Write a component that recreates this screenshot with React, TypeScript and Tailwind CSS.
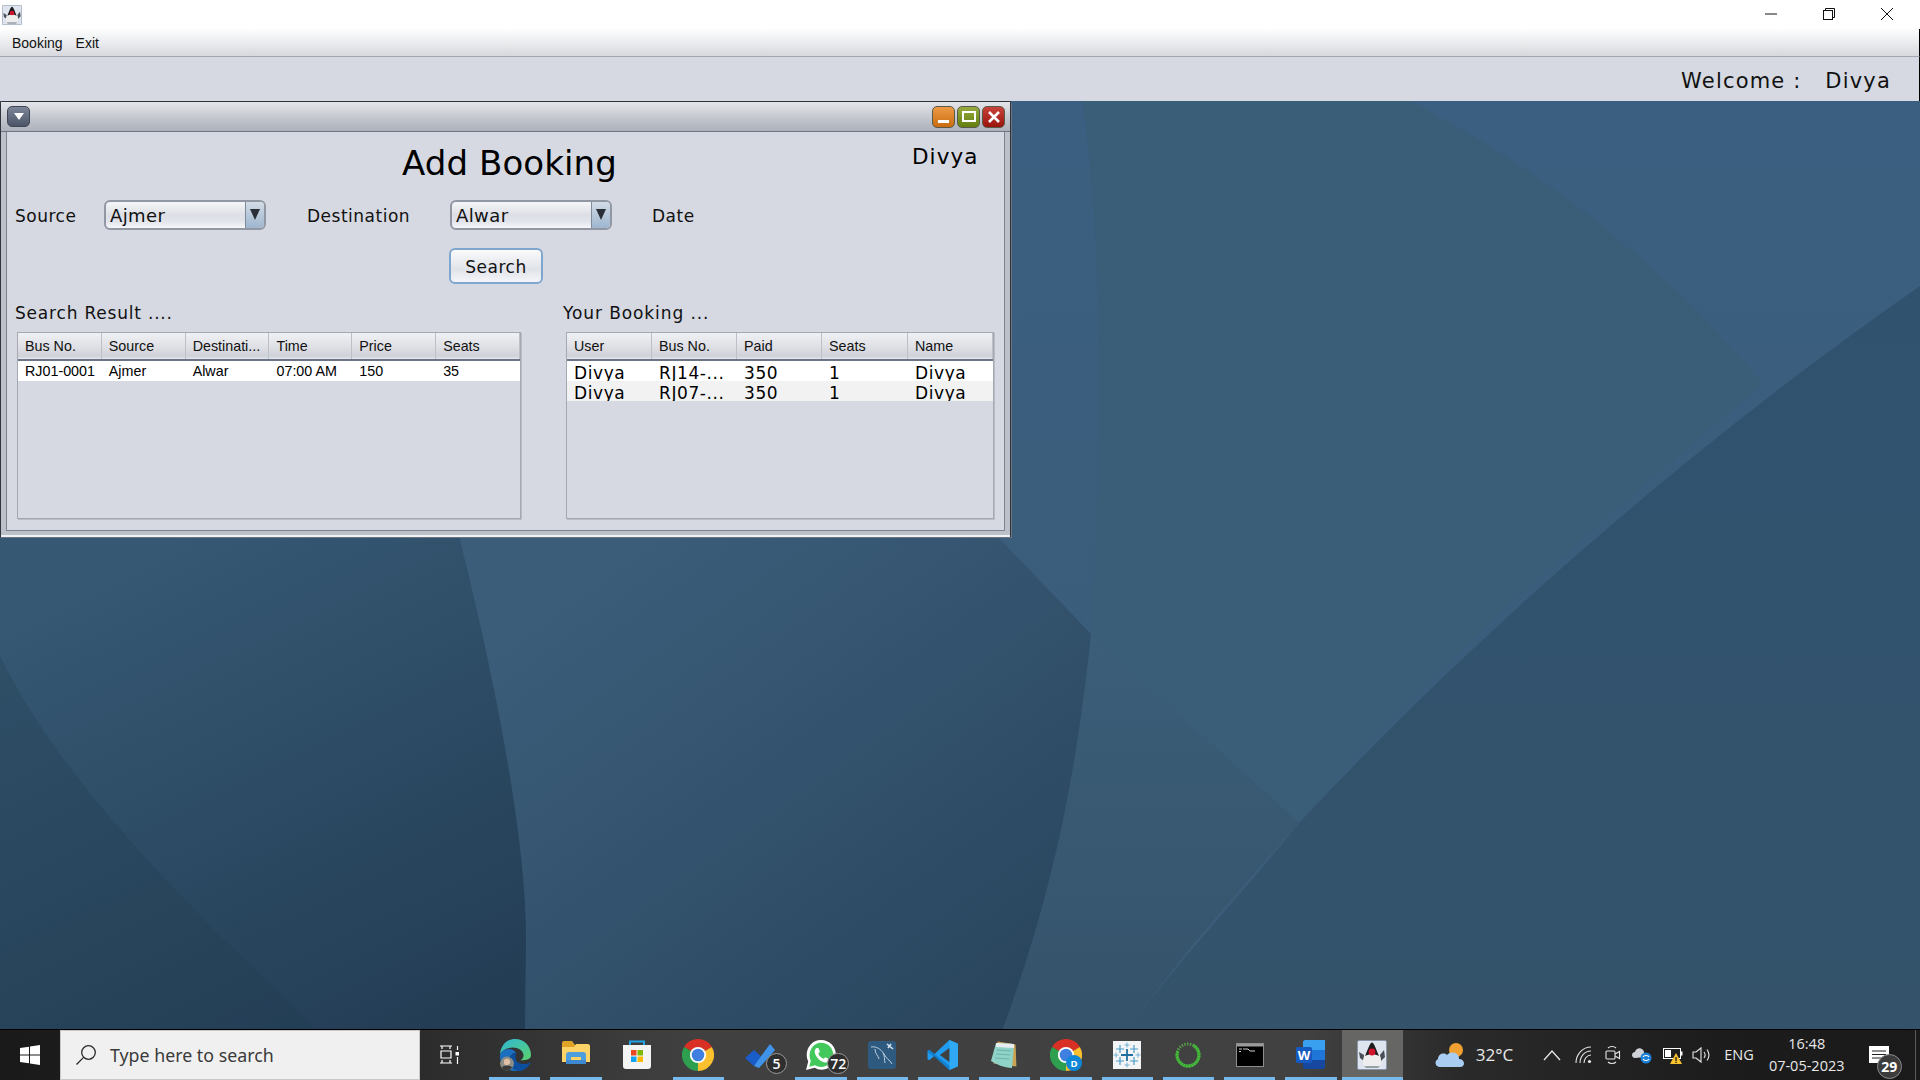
import React from 'react'

const dejavu = "font-['DejaVu_Sans',sans-serif]"

function Wallpaper() {
  return (
    <svg className="absolute inset-0 w-full h-full" viewBox="0 102 1920 928" preserveAspectRatio="none">
      <defs>
        <linearGradient id="wpTop" x1="0" y1="0" x2="0" y2="1">
          <stop offset="0" stopColor="#3b5f80" />
          <stop offset="1" stopColor="#3a5c78" />
        </linearGradient>
        <linearGradient id="wpMid" gradientUnits="userSpaceOnUse" x1="620" y1="560" x2="960" y2="1030">
          <stop offset="0" stopColor="#3b5d79" />
          <stop offset="1" stopColor="#2a465f" />
        </linearGradient>
        <linearGradient id="wpLeft" gradientUnits="userSpaceOnUse" x1="180" y1="540" x2="420" y2="1030">
          <stop offset="0" stopColor="#365873" />
          <stop offset="1" stopColor="#233d55" />
        </linearGradient>
        <linearGradient id="wpTri" x1="0" y1="0" x2="0" y2="1">
          <stop offset="0" stopColor="#3c5e78" />
          <stop offset="1" stopColor="#35536b" />
        </linearGradient>
        <linearGradient id="wpDiag" x1="0" y1="0" x2="0" y2="1">
          <stop offset="0" stopColor="#30526f" />
          <stop offset="1" stopColor="#34536b" />
        </linearGradient>
      </defs>
      <rect x="0" y="102" width="1920" height="928" fill="url(#wpTop)" />
      <path d="M1082 102 C1100 220 1106 400 1091 635 L1299 824 C1400 700 1520 590 1763 385 C1640 240 1520 160 1410 102 Z" fill="#3a5d78" />
      <path d="M1920 287 C1700 440 1480 630 1299 824 C1230 910 1170 970 1130 1030 L1920 1030 Z" fill="url(#wpDiag)" />
      <path d="M1091 635 L1299 824 C1230 900 1170 970 1130 1030 L1003 1030 C1050 900 1075 790 1091 635 Z" fill="url(#wpTri)" />
      <path d="M0 537 L997 537 L1091 635 C1075 790 1050 900 1003 1030 L0 1030 Z" fill="url(#wpMid)" />
      <path d="M0 537 L459 537 C490 660 526 830 526 940 L525 1030 L0 1030 Z" fill="url(#wpLeft)" />
      <path d="M0 657 C60 780 180 900 316 1030 L0 1030 Z" fill="#203c4e" fillOpacity="0.28" />
    </svg>
  )
}

function JavaIcon({ size }: { size: number }) {
  return (
    <svg width={size} height={size} viewBox="0 0 30 30">
      <rect x="0.5" y="0.5" width="29" height="29" rx="1.5" fill="#dfe5ee" stroke="#8a97aa" />
      <path d="M7 15 L2 12 L3 18 L7 21 Z M23 15 L27 10 L28 17 L24 21 Z" fill="#4a4f57" />
      <path d="M8 14 L22 14 C24 18 25 22 23 26 L7 26 C5 22 6 18 8 14 Z" fill="#eeeeee" />
      <path d="M7 26 L23 26 L21 28 L9 28 Z" fill="#9aa0a8" />
      <path d="M15 2.5 C17 2.5 19 9 22 16 C18 13.5 12 13.5 8 16 C11 9 13 2.5 15 2.5 Z" fill="#1d1d1f" />
      <circle cx="15" cy="12" r="3.4" fill="#d3132a" />
    </svg>
  )
}

function Chrome({ badge }: { badge?: boolean }) {
  return (
    <svg width="32" height="32" viewBox="0 0 30 30">
      <path d="M15 15 L2 7.5 A15 15 0 0 1 28 7.5 Z" fill="#d93025" />
      <path d="M15 15 L28 7.5 A15 15 0 0 1 15 30 Z" fill="#fbc02d" />
      <path d="M15 15 L15 30 A15 15 0 0 1 2 7.5 Z" fill="#2e9e4f" />
      <circle cx="15" cy="15" r="7.6" fill="#fff" />
      <circle cx="15" cy="15" r="5.9" fill="#3f7fe0" />
      {badge && <circle cx="22.5" cy="22.5" r="7.5" fill="#0f86d6" />}
      {badge && <text x="22.5" y="26" fontSize="9" fontWeight="700" textAnchor="middle" fill="#fff" fontFamily="Open Sans">D</text>}
    </svg>
  )
}

function Edge() {
  return (
    <svg width="32" height="32" viewBox="0 0 30 30">
      <defs>
        <linearGradient id="edgeA" x1="0" y1="0" x2="1" y2="1">
          <stop offset="0" stopColor="#2fb5d8" />
          <stop offset="1" stopColor="#5ad36b" />
        </linearGradient>
      </defs>
      <path d="M1 14 C2 5 8 0 15 0 C24 0 30 7 30 15 C30 19 26 20 20 20 C24 18 24 13 20 10 C14 6 5 8 1 14 Z" fill="url(#edgeA)" />
      <path d="M1 14 C5 8 13 8 16 13 C12 13 9 17 10 22 C11 27 16 30 20 30 C16 31 3 30 1 18 Z" fill="#1b6fc0" />
      <path d="M20 30 C24 29 28 26 30 21 C27 24 21 24 18 22 C14 20 16 15 16 13 C11 14 9 18 10 22 C11 27 16 30 20 30 Z" fill="#0c4f9e" />
      <circle cx="7.5" cy="23" r="6.5" fill="#8d8d88" />
      <circle cx="7.5" cy="21.5" r="3" fill="#e0bfa4" />
      <path d="M2.5 27 C4 24 11 24 12.5 27 L9 29.5 L5 29.5 Z" fill="#3b3b3b" />
    </svg>
  )
}

function Folder() {
  return (
    <svg width="30" height="30" viewBox="0 0 30 30">
      <path d="M1 3 C1 2 2 1 3 1 L11 1 L14 5 L14 7 L1 7 Z" fill="#e0a526" />
      <path d="M1 7 L13 7 L15 4 L27 4 C28 4 29 5 29 6 L29 22 L1 22 Z" fill="#fcd367" />
      <path d="M5 30 L5 18 C5 16 6 15 8 15 L22 15 C24 15 25 16 25 18 L25 23 L20 23 L20 20 L10 20 L10 23 L5 23 Z" transform="translate(0 -3)" fill="#4d9edf" />
      <rect x="5" y="20" width="20" height="4" fill="#3d8ad0" />
      <rect x="10" y="17" width="10" height="3" fill="#fcd367" />
    </svg>
  )
}

function Store() {
  return (
    <svg width="30" height="30" viewBox="0 0 30 30">
      <path d="M8 5 L8 1.5 L22 1.5 L22 5" fill="none" stroke="#21a4e6" strokeWidth="2" />
      <path d="M1 5 L29 5 L29 26 C29 28 28 29 26 29 L4 29 C2 29 1 28 1 26 Z" fill="#f4f4f4" />
      <rect x="9" y="10" width="5.5" height="5.5" fill="#e8481f" />
      <rect x="15.5" y="10" width="5.5" height="5.5" fill="#7eb901" />
      <rect x="9" y="16.5" width="5.5" height="5.5" fill="#13a2ef" />
      <rect x="15.5" y="16.5" width="5.5" height="5.5" fill="#fdb800" />
    </svg>
  )
}

function Todo() {
  return (
    <svg width="30" height="30" viewBox="0 0 30 30">
      <path d="M0 18 L9 10 L18 18 L9 26 Z" fill="#1a5cc8" />
      <path d="M9 26 L25 4 L30 10 L14 28 Z" fill="#3f94ea" />
    </svg>
  )
}

function WhatsApp() {
  return (
    <svg width="32" height="32" viewBox="0 0 30 30">
      <path d="M1 29 L3 21 C-1 13 4 1 15 1 C23 1 29 7 29 15 C29 26 17 32 9 27 Z" fill="#fff" />
      <path d="M4 26 L5.5 20.5 C2 13 7 3.5 15 3.5 C21.5 3.5 26.5 8.5 26.5 15 C26.5 23.5 17 29 9.5 24.6 Z" fill="#42c85b" />
      <path d="M11 8.5 C9.5 9 8.5 11 9.5 14 C11 18 15 21.5 19 22 C21 22 22.5 20.5 22 18.5 L19 17 L17.5 18.5 C15.5 18 13 15.5 12.5 13.5 L14 12 L12.5 8.5 Z" fill="#fff" />
    </svg>
  )
}

function MySql() {
  return (
    <svg width="30" height="30" viewBox="0 0 30 30">
      <rect x="1" y="1" width="28" height="28" rx="3" fill="#2f5a80" />
      <path d="M4 7 C9 6 14 9 17 14 C19 17 20 19 23 21 L25 24 M8 9 C8 14 11 15 12 19 M16 13 C18 15 17 20 18 23" fill="none" stroke="#b9cfe0" strokeWidth="1" />
      <path d="M20 4 L26 9 M24 4 L21 8" fill="none" stroke="#d5e2ec" strokeWidth="1.6" />
    </svg>
  )
}

function VsCode() {
  return (
    <svg width="32" height="32" viewBox="0 0 30 30">
      <path d="M21 1 L29 4.5 L29 25.5 L21 29 L7 16 L2 20 L0.5 19 L0.5 11 L2 10 L7 14 Z" fill="#1f9cf0" />
      <path d="M21 1 L21 29 L29 25.5 L29 4.5 Z" fill="#30a9f4" />
      <path d="M21 8.5 L12 15 L21 21.5 Z" fill="#404040" />
      <path d="M2 10 L21 25 L21 29 L0.5 12 Z" fill="#0a6cb8" opacity="0.55" />
    </svg>
  )
}

function Notepad() {
  return (
    <svg width="30" height="30" viewBox="0 0 30 30">
      <path d="M7 2 L25 4 L27 26 L4 24 Z" transform="rotate(3 15 15)" fill="#c9a455" />
      <path d="M6 3 L24 4 L22 28 C14 28 6 24 1 21 Z" fill="#8fd3c6" />
      <path d="M6 3 L24 4 L24 8 L6 7 Z" fill="#e8eef0" />
      <path d="M7 10 L21 11 M6 14 L20 15 M5 18 L19 19" stroke="#5f9f9f" strokeWidth="0.7" />
    </svg>
  )
}

function Tableau() {
  const plus = (x: number, y: number, s: number, c: string, w: number) => (
    <path d={`M${x - s} ${y} H${x + s} M${x} ${y - s} V${y + s}`} stroke={c} strokeWidth={w} />
  )
  return (
    <svg width="28" height="28" viewBox="0 0 28 28">
      <rect width="28" height="28" fill="#f2f4f6" />
      {plus(14, 14, 6, '#1f6f9f', 1.8)}
      {plus(7, 8, 4, '#4a9cc8', 1.2)}
      {plus(21, 8, 4, '#4a9cc8', 1.2)}
      {plus(7, 20, 4, '#4a9cc8', 1.2)}
      {plus(21, 20, 4, '#4a9cc8', 1.2)}
      {plus(14, 4, 2.5, '#6aaed0', 0.9)}
      {plus(14, 24, 2.5, '#6aaed0', 0.9)}
      {plus(3, 14, 2.5, '#6aaed0', 0.9)}
      {plus(25, 14, 2.5, '#6aaed0', 0.9)}
    </svg>
  )
}

function Ring() {
  return (
    <svg width="28" height="28" viewBox="0 0 28 28">
      <circle cx="14" cy="14" r="11" fill="none" stroke="#35a92e" strokeWidth="3.2" strokeDasharray="50 20" transform="rotate(-60 14 14)" />
      <circle cx="14" cy="14" r="11" fill="none" stroke="#5cb84f" strokeWidth="3" strokeDasharray="2 2" strokeDashoffset="0" transform="rotate(150 14 14)" pathLength="100" opacity="0.8" />
    </svg>
  )
}

function Cmd() {
  return (
    <svg width="28" height="24" viewBox="0 0 28 24">
      <rect x="0.5" y="0.5" width="27" height="23" fill="#000" stroke="#8d8d8d" />
      <rect x="1" y="1" width="26" height="2.5" fill="#9a9a9a" />
      <path d="M3 6 H6 M3 8.5 H5 M7 6 H12 L14 8 H19" stroke="#cfcfcf" strokeWidth="1" fill="none" />
    </svg>
  )
}

function Word() {
  return (
    <svg width="30" height="30" viewBox="0 0 30 30">
      <path d="M7 2 C7 1 8 0 9 0 L29 0 L29 10 L7 10 Z" fill="#38a0ef" />
      <rect x="7" y="10" width="22" height="10" fill="#1f76d8" />
      <path d="M7 20 L29 20 L29 27 C29 28 28 29 27 29 L9 29 C8 29 7 28 7 27 Z" fill="#16489f" />
      <rect x="0" y="7" width="16" height="16" rx="1.5" fill="#155bbf" />
      <text x="8" y="20" fontSize="13" fontWeight="700" textAnchor="middle" fill="#fff" fontFamily="Open Sans">W</text>
    </svg>
  )
}

const apps: { icon: React.ReactNode; open?: boolean; badge?: string; active?: boolean }[] = [
  { icon: <Edge />, open: true },
  { icon: <Folder />, open: true },
  { icon: <Store /> },
  { icon: <Chrome />, open: true },
  { icon: <Todo />, badge: '5' },
  { icon: <WhatsApp />, open: true, badge: '72' },
  { icon: <MySql />, open: true },
  { icon: <VsCode />, open: true },
  { icon: <Notepad />, open: true },
  { icon: <Chrome badge />, open: true },
  { icon: <Tableau />, open: true },
  { icon: <Ring />, open: true },
  { icon: <Cmd />, open: true },
  { icon: <Word />, open: true },
  { icon: <JavaIcon size={30} />, open: true, active: true },
]

function Taskbar() {
  return (
    <div className="h-[51px] border-t border-black flex text-white bg-[linear-gradient(90deg,#191919_0%,#2c2c2c_22%,#404040_36%,#414141_68%,#2a2a2a_76%,#1c1c1c_90%,#1a1a1a_100%)] font-['Open_Sans',sans-serif]">
      <div className="w-[60px] flex items-center justify-center">
        <svg width="20" height="20" viewBox="0 0 20 20" fill="#fff">
          <path d="M0 3 L9 1.7 L9 9.5 L0 9.5 Z M10 1.5 L20 0 L20 9.5 L10 9.5 Z M0 10.5 L9 10.5 L9 18.3 L0 17 Z M10 10.5 L20 10.5 L20 20 L10 18.5 Z" />
        </svg>
      </div>
      <div className="w-[360px] bg-[#f0f0f0] border border-[#c8c8c8] flex items-center pl-[14px] gap-[13px]">
        <svg width="22" height="22" viewBox="0 0 22 22" fill="none" stroke="#2a2a2a" strokeWidth="1.3">
          <circle cx="13.5" cy="8.5" r="6.8" />
          <path d="M8.6 13.4 L1.5 20.5" />
        </svg>
        <span className="text-[17.8px] text-[#3a3a3a] font-['Noto_Sans',sans-serif]">Type here to search</span>
      </div>
      <div className="w-[58px] flex items-center justify-center">
        <svg width="20" height="20" viewBox="0 0 20 20" fill="none" stroke="#fff" strokeWidth="1.2">
          <path d="M1 1 H13 M3 1 V4 M11 1 V4 M2 6 H12 V13 H2 Z M1 18 H13 M3 15 V18 M11 15 V18 M18.5 1 V5 M18.5 12 V19" />
          <rect x="16.5" y="7" width="3.5" height="3.5" fill="#fff" stroke="none" />
        </svg>
      </div>
      <div className="flex ml-[6px]">
        {apps.map((app, i) => (
          <div key={i} className={`relative w-[61.25px] flex items-center justify-center ${app.active ? 'bg-[#666664]' : ''}`}>
            {app.icon}
            {app.badge && (
              <span className="absolute left-[37px] top-[23px] h-[21px] min-w-[21px] px-[2px] rounded-full bg-[#2e2e2e] border border-[#9a9a9a] flex items-center justify-center text-[14px] font-semibold leading-none">
                {app.badge}
              </span>
            )}
            {app.open && <div className={`absolute bottom-0 h-[3px] bg-[#76b9ed] ${app.active ? 'left-0 right-0' : 'left-[5px] right-[5px]'}`} />}
          </div>
        ))}
      </div>
      <div className="flex-1 flex items-center relative">
        <div className="ml-[31px]">
          <svg width="32" height="28" viewBox="0 0 32 28">
            <circle cx="22" cy="9" r="7" fill="#f0a030" />
            <path d="M6 26 C1 26 0 20 4 18 C4 13 10 11 13 14 C17 9 26 12 25 18 C31 18 32 26 26 26 Z" fill="#a9cdf2" />
          </svg>
        </div>
        <span className="ml-[10px] text-[17px] text-[#e8e8e8]">32°C</span>
        <div className="ml-[30px] flex items-center gap-[10px] text-[#e6e6e6]">
          <svg width="18" height="12" viewBox="0 0 18 12" fill="none" stroke="currentColor" strokeWidth="1.3"><path d="M1 11 L9 2 L17 11" /></svg>
          <svg width="18" height="18" viewBox="0 0 18 18" fill="none" stroke="currentColor" strokeWidth="1.1" className="ml-[4px]">
            <path d="M1 17 C1 8 8 1 16 1 M5 17 C5 10 10 5 16 5 M9 17 C9 13 12 9 16 9" />
            <circle cx="14.5" cy="15.5" r="1.6" fill="currentColor" stroke="none" />
          </svg>
          <svg width="16" height="20" viewBox="0 0 16 20" fill="none" stroke="currentColor" strokeWidth="1.1" className="ml-[2px]">
            <rect x="1" y="6" width="9" height="8" rx="1" />
            <path d="M10 9 L14.5 6.5 V13.5 L10 11 M3 3 C5 1 9 1 11 3 M3 17 C5 19 9 19 11 17" />
          </svg>
          <svg width="20" height="18" viewBox="0 0 20 18" className="ml-[1px]">
            <path d="M3 12 C-1 12 -1 6 3 6 C4 1 11 1 12 6 L13 11 L3 12 Z" fill="#cfd3d8" />
            <circle cx="14" cy="12" r="5.5" fill="#1c7fd6" />
            <path d="M11 11 C12 9 16 9 17 11 M17 13 C16 15 12 15 11 13" fill="none" stroke="#fff" strokeWidth="1.2" />
          </svg>
          <svg width="20" height="20" viewBox="0 0 20 20" className="ml-[1px]">
            <rect x="0.5" y="3.5" width="17" height="10" fill="none" stroke="#fff" />
            <rect x="2" y="5" width="6" height="7" fill="#fff" />
            <rect x="18" y="6.5" width="1.5" height="4" fill="#fff" />
            <path d="M13 8 L19 19 L7 19 Z" fill="#f8c32c" />
            <rect x="12.4" y="12" width="1.3" height="4" fill="#222" />
            <rect x="12.4" y="16.7" width="1.3" height="1.3" fill="#222" />
          </svg>
          <svg width="20" height="18" viewBox="0 0 20 18" fill="none" stroke="currentColor" strokeWidth="1.1" className="-ml-[1px]">
            <path d="M1 6 H4 L9 2 V16 L4 12 H1 Z M12 6 C13.5 8 13.5 10 12 12 M15 3.5 C17.5 7 17.5 11 15 14.5" />
          </svg>
        </div>
        <span className="ml-[12px] text-[14.5px] text-[#e8e8e8]">ENG</span>
        <div className="ml-[13px] w-[80px] flex flex-col items-center text-[14.5px] leading-[22px] text-[#e8e8e8]">
          <span>16:48</span>
          <span>07-05-2023</span>
        </div>
        <div className="relative ml-[22px]">
          <svg width="20" height="18" viewBox="0 0 20 18">
            <path d="M0 0 H20 V17 H0 Z" fill="#fff" />
            <path d="M3 5 H17 M3 8.5 H17 M3 12 H12" stroke="#222" strokeWidth="1.2" />
          </svg>
          <span className="absolute left-[8px] top-[8px] w-[25px] h-[25px] rounded-full bg-[#3c3c3c] border border-[#8a8a8a] flex items-center justify-center text-[14px] font-bold leading-none">29</span>
        </div>
        <div className="absolute right-[4px] top-0 bottom-0 w-px bg-[#5a5a5a]" />
      </div>
    </div>
  )
}

function DataTable({ widths, headers, rows, width, mono }: { widths: number[]; headers: string[]; rows: string[][]; width: string; mono?: boolean }) {
  return (
    <div className={`${width} h-[187px] border border-[#a3a8b2] shadow-[1px_1px_0_#b8bcc5]`}>
      <div className="flex h-[28px] border-b-2 border-[#6c7585] bg-[linear-gradient(180deg,#f0f1f4_0%,#dfe1e6_50%,#cfd2d8_90%,#e6e9f1_100%)] font-['Liberation_Sans',sans-serif] text-[14.3px] text-[#111]">
        {headers.map((h, i) => (
          <div key={h} style={{ width: widths[i] }} className="pl-[7px] pt-[1px] flex items-center border-r border-[#bcc0c9] overflow-hidden whitespace-nowrap">{h}</div>
        ))}
      </div>
      {rows.map((row, r) => (
        <div key={r} className={`flex h-[20px] ${r % 2 ? 'bg-[#f2f2f2]' : 'bg-white'} ${mono ? `${dejavu} text-[17px]` : "font-['Liberation_Sans',sans-serif] text-[14.3px]"} text-black overflow-hidden`}>
          {row.map((c, i) => (
            <div key={i} style={{ width: widths[i] }} className={`pl-[7px] whitespace-nowrap overflow-hidden ${mono ? 'leading-[24px] tracking-[0.6px]' : 'leading-[20px]'}`}>{c}</div>
          ))}
        </div>
      ))}
    </div>
  )
}

function Combo({ value }: { value: string }) {
  return (
    <div className="w-[162px] h-[30px] flex rounded-[6px] border-2 border-[#9197a3] overflow-hidden bg-[linear-gradient(180deg,#f5f6f8_0%,#dcdfe5_50%,#e1e4ea_75%,#f6f7fa_100%)]">
      <span className="flex-1 pl-[4px] leading-[28px] text-[18px] tracking-[0.4px] text-[#111]">{value}</span>
      <div className="w-[19px] border-l border-[#7f8b9b] bg-[linear-gradient(180deg,#d3dce6_0%,#b7c8da_50%,#9fb6cf_100%)] flex justify-center pt-[7px]">
        <svg width="10" height="11" viewBox="0 0 10 11"><path d="M0 0 H10 L5 11 Z" fill="#2a2e36" /></svg>
      </div>
    </div>
  )
}

function FrameButton({ color, children }: { color: string; children: React.ReactNode }) {
  return <div className={`w-[23px] h-[22px] rounded-[5px] border border-[#5a5a4a] flex items-center justify-center ${color}`}>{children}</div>
}

function BookingFrame() {
  return (
    <div className={`absolute left-0 top-0 w-[1011px] h-[436px] flex flex-col border-t border-r border-l border-[#2f343c] rounded-t-[2px] bg-[#bcc0c9] shadow-[inset_0_-2px_0_#f0f1f4,1px_1px_0_#6d7280] ${dejavu}`}>
      <div className="h-[30px] flex items-center justify-between pl-[6px] pr-[5px] border-b border-[#6d7585] bg-[linear-gradient(180deg,#e4e6ea_0%,#c6c9d0_50%,#adb1ba_100%)]">
        <div className="w-[23px] h-[21px] rounded-[5px] border border-[#3f4655] bg-[linear-gradient(180deg,#7d8699_0%,#4d5569_100%)] flex items-center justify-center">
          <svg width="10" height="7" viewBox="0 0 10 7"><path d="M0 0 H10 L5 7 Z" fill="#fff" /></svg>
        </div>
        <div className="flex gap-[2px]">
          <FrameButton color="bg-[linear-gradient(180deg,#ee9a45_0%,#c96c10_100%)]">
            <div className="w-[11px] h-[3px] bg-white mt-[10px]" />
          </FrameButton>
          <FrameButton color="bg-[linear-gradient(180deg,#97aa3f_0%,#64800f_100%)]">
            <div className="w-[14px] h-[11px] border-2 border-white" />
          </FrameButton>
          <FrameButton color="bg-[linear-gradient(180deg,#c8433a_0%,#9a120c_100%)]">
            <svg width="12" height="12" viewBox="0 0 12 12"><path d="M1 1 L11 11 M11 1 L1 11" stroke="#fff" strokeWidth="2.6" /></svg>
          </FrameButton>
        </div>
      </div>
      <div className="flex-1 mx-[5px] mb-[6px] bg-[#d6d9e1] border-l border-r border-b border-[#7d828d] flex flex-col">
        <div className="h-[68px] flex pl-[395px]">
          <h1 className="text-[34px] leading-[62px] tracking-[0.1px] text-black font-normal">Add Booking</h1>
          <span className="ml-[295px] text-[21.5px] leading-[50px] tracking-[1.1px] text-black">Divya</span>
        </div>
        <div className="flex items-center h-[30px] text-[17px] tracking-[0.5px] text-[#111]">
          <span className="ml-[8px] w-[89px] pt-[3px]">Source</span>
          <Combo value="Ajmer" />
          <span className="ml-[41px] w-[143px] pt-[3px]">Destination</span>
          <Combo value="Alwar" />
          <span className="ml-[40px] pt-[3px]">Date</span>
        </div>
        <div className="pl-[442px] pt-[18px]">
          <button className="w-[94px] h-[36px] pt-[3px] rounded-[6px] border-2 border-[#7ea6cf] bg-[linear-gradient(180deg,#fbfbfc_0%,#e0e3e9_60%,#f5f6f8_100%)] text-[17px] tracking-[0.5px] text-[#111]">Search</button>
        </div>
        <div className="flex mt-[15px]">
          <div className="ml-[8px] w-[548px]">
            <div className="h-[33px] text-[17px] tracking-[0.8px] text-[#111] leading-[28px]">Search Result ....</div>
            <div className="ml-[2px]">
              <DataTable
                width="w-[504px]"
                widths={[84, 84, 84, 83, 84, 84]}
                headers={['Bus No.', 'Source', 'Destinati...', 'Time', 'Price', 'Seats']}
                rows={[['RJ01-0001', 'Ajmer', 'Alwar', '07:00 AM', '150', '35']]}
              />
            </div>
          </div>
          <div>
            <div className="h-[33px] text-[17px] tracking-[0.9px] text-[#111] leading-[28px]">Your Booking ...</div>
            <div className="ml-[3px]">
              <DataTable
                mono
                width="w-[428px]"
                widths={[85, 85, 85, 86, 85]}
                headers={['User', 'Bus No.', 'Paid', 'Seats', 'Name']}
                rows={[
                  ['Divya', 'RJ14-...', '350', '1', 'Divya'],
                  ['Divya', 'RJ07-...', '350', '1', 'Divya'],
                ]}
              />
            </div>
          </div>
        </div>
      </div>
    </div>
  )
}

export default function App() {
  return (
    <div className="w-[1920px] h-[1080px] flex flex-col overflow-hidden bg-[#3a5f82]">
      {/* Window title bar */}
      <div className="h-[29px] bg-white flex items-center justify-between pl-[2px]">
        <JavaIcon size={20} />
        <div className="flex items-center text-black pr-[4px] pb-[2px]">
          <div className="w-[58px] flex justify-center">
            <svg width="12" height="12" viewBox="0 0 12 12"><path d="M0 6 H12" stroke="#111" strokeWidth="1" /></svg>
          </div>
          <div className="w-[58px] flex justify-center">
            <svg width="12" height="12" viewBox="0 0 12 12" fill="none" stroke="#111"><rect x="0.5" y="2.5" width="9" height="9" /><path d="M2.5 2.5 V0.5 H11.5 V9.5 H9.5" /></svg>
          </div>
          <div className="w-[58px] flex justify-center">
            <svg width="12" height="12" viewBox="0 0 12 12"><path d="M0 0 L12 12 M12 0 L0 12" stroke="#111" strokeWidth="1" /></svg>
          </div>
        </div>
      </div>

      {/* Menu bar */}
      <div className="h-[28px] flex items-center gap-[13px] pl-[12px] pt-[2px] border-b border-b-[#a2a6b2] border-r border-r-black bg-[linear-gradient(180deg,#fdfdfd_0%,#eceef0_45%,#d6d8dd_100%)] font-['Liberation_Sans',sans-serif] text-[14px] text-[#111]">
        <span>Booking</span>
        <span>Exit</span>
      </div>

      {/* Welcome strip */}
      <div className={`h-[44px] bg-[#d6d9e1] flex items-center justify-end pr-[28px] pt-[6px] border-r border-r-black text-[21px] tracking-[1.2px] text-[#111] whitespace-pre ${dejavu}`}>
        Welcome :   Divya
      </div>

      {/* Desktop pane */}
      <div className="relative flex-1">
        <Wallpaper />
        <BookingFrame />
      </div>

      <Taskbar />
    </div>
  )
}
